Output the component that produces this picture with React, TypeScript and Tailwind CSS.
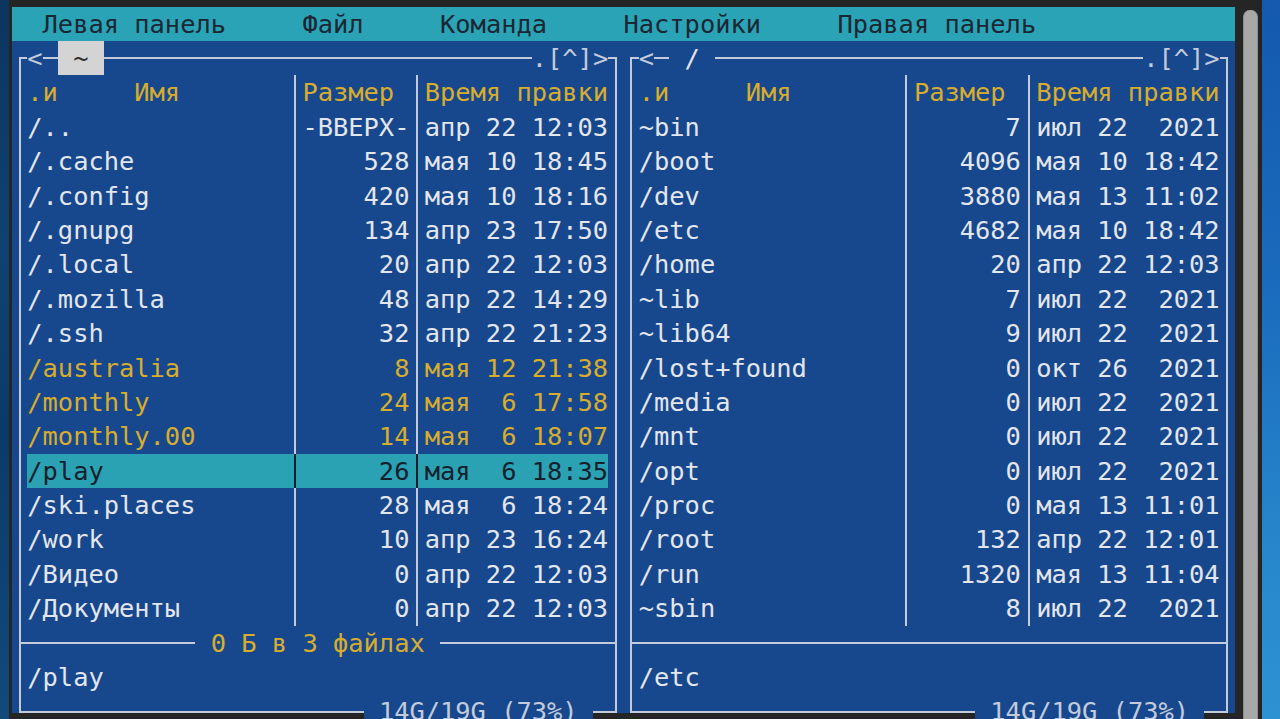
import React from 'react';

type Tone = 'normal' | 'yellow' | 'selected';

type FileRow = {
  name: string;
  size: string;
  date: string;
  tone?: Tone;
};

const leftRows: FileRow[] = [
  { name: '/..', size: '-ВВЕРХ-', date: 'апр 22 12:03' },
  { name: '/.cache', size: '528', date: 'мая 10 18:45' },
  { name: '/.config', size: '420', date: 'мая 10 18:16' },
  { name: '/.gnupg', size: '134', date: 'апр 23 17:50' },
  { name: '/.local', size: '20', date: 'апр 22 12:03' },
  { name: '/.mozilla', size: '48', date: 'апр 22 14:29' },
  { name: '/.ssh', size: '32', date: 'апр 22 21:23' },
  { name: '/australia', size: '8', date: 'мая 12 21:38', tone: 'yellow' },
  { name: '/monthly', size: '24', date: 'мая  6 17:58', tone: 'yellow' },
  { name: '/monthly.00', size: '14', date: 'мая  6 18:07', tone: 'yellow' },
  { name: '/play', size: '26', date: 'мая  6 18:35', tone: 'selected' },
  { name: '/ski.places', size: '28', date: 'мая  6 18:24' },
  { name: '/work', size: '10', date: 'апр 23 16:24' },
  { name: '/Видео', size: '0', date: 'апр 22 12:03' },
  { name: '/Документы', size: '0', date: 'апр 22 12:03' },
];

const rightRows: FileRow[] = [
  { name: '~bin', size: '7', date: 'июл 22  2021' },
  { name: '/boot', size: '4096', date: 'мая 10 18:42' },
  { name: '/dev', size: '3880', date: 'мая 13 11:02' },
  { name: '/etc', size: '4682', date: 'мая 10 18:42' },
  { name: '/home', size: '20', date: 'апр 22 12:03' },
  { name: '~lib', size: '7', date: 'июл 22  2021' },
  { name: '~lib64', size: '9', date: 'июл 22  2021' },
  { name: '/lost+found', size: '0', date: 'окт 26  2021' },
  { name: '/media', size: '0', date: 'июл 22  2021' },
  { name: '/mnt', size: '0', date: 'июл 22  2021' },
  { name: '/opt', size: '0', date: 'июл 22  2021' },
  { name: '/proc', size: '0', date: 'мая 13 11:01' },
  { name: '/root', size: '132', date: 'апр 22 12:01' },
  { name: '/run', size: '1320', date: 'мая 13 11:04' },
  { name: '~sbin', size: '8', date: 'июл 22  2021' },
];

function Sep({ dark }: { dark?: boolean }) {
  return (
    <div className="w-[1ch] flex-none flex justify-center">
      <div className={dark ? 'w-[2px] h-full bg-[#12202b]' : 'w-[2px] h-full bg-[#c3cbdb]'} />
    </div>
  );
}

function Row({ row }: { row: FileRow }) {
  const selected = row.tone === 'selected';
  const color = selected
    ? 'text-[#14212c] bg-[#2ba2b4]'
    : row.tone === 'yellow'
    ? 'text-[#d8ad2e]'
    : 'text-[#e3e6ec]';
  return (
    <div className={`flex h-[34.4px] ${color}`}>
      <div className="w-[17ch] flex-none overflow-hidden">{row.name}</div>
      <Sep dark={selected} />
      <div className="w-[7ch] flex-none text-right">{row.size}</div>
      <Sep dark={selected} />
      <div className="w-[12ch] flex-none">{row.date}</div>
    </div>
  );
}

interface PanelProps {
  path: string;
  active?: boolean;
  rows: FileRow[];
  status?: string;
  current: string;
}

function Panel({ path, active, rows, status, current }: PanelProps) {
  return (
    <div className="w-[40ch] flex-none">
      <div className="mt-[16.2px] mx-[calc(0.5ch-1px)] border-2 border-[#c3cbdb] px-[calc(0.5ch-1px)]">
        {/* title on the top border */}
        <div className="mt-[-18.2px] h-[34.4px] flex">
          <span className="bg-[#17488d] text-[#c3cbdb]">&lt;</span>
          <span className="w-[1ch]" />
          {active ? (
            <span className="bg-[#d4d4d4] text-[#2e2e2e]"> {path} </span>
          ) : (
            <span className="bg-[#17488d] text-[#e3e6ec]"> {path} </span>
          )}
          <span className="flex-1" />
          <span className="bg-[#17488d] text-[#c3cbdb]">.[^]&gt;</span>
        </div>

        {/* column headers */}
        <div className="flex h-[34.4px] text-[#d8ad2e]">
          <div className="w-[17ch] flex-none">.и     Имя</div>
          <Sep />
          <div className="w-[7ch] flex-none">Размер</div>
          <Sep />
          <div className="w-[12ch] flex-none">Время правки</div>
        </div>

        {rows.map((r) => (
          <Row key={r.name} row={r} />
        ))}

        {/* mini status line */}
        <div className="mx-[calc(1px-0.5ch)] h-[34.4px] flex items-center">
          <div className="flex-1 h-[2px] bg-[#c3cbdb]" />
          {status && <span className="text-[#d8ad2e]"> {status} </span>}
          <div className="flex-1 h-[2px] bg-[#c3cbdb]" />
        </div>

        <div className="h-[34.4px] text-[#e3e6ec]">{current}</div>

        {/* disk usage on the bottom border */}
        <div className="h-[34.4px] mb-[-18.2px] flex justify-end">
          <span className="bg-[#17488d] text-[#c3cbdb]"> 14G/19G (73%) </span>
          <span className="w-[1ch]" />
        </div>
      </div>
    </div>
  );
}

export default function App() {
  return (
    <div className="w-[1280px] h-[719px] overflow-hidden flex bg-[#252525] font-['DejaVu_Sans_Mono','Liberation_Mono',monospace] text-[25.4px] leading-[34.4px] whitespace-pre">
      <div className="w-[9px] flex-none bg-[linear-gradient(180deg,#0c355f_0%,#0f4272_35%,#0b3a68_60%,#124a7c_100%)]" />
      <div className="w-[1253px] flex-none flex bg-[#252525] pt-[6.6px] pl-[3px]">
        <div className="w-[80ch] flex-none self-start bg-[#17488d]">
          <div className="h-[34.4px] bg-[#2aa3b6] text-[#1b2733]">
            {'  Левая панель     Файл     Команда     Настройки     Правая панель'}
          </div>
          <div className="flex">
            <Panel path="~" active rows={leftRows} status="0 Б в 3 файлах" current="/play" />
            <Panel path="/" rows={rightRows} current="/etc" />
          </div>
        </div>
        <div className="w-[7.6px] flex-none" />
        <div className="w-[15px] flex-none mt-[3.4px] bg-[#a8a8a8] rounded-t-[7px] border-x border-[#8e8e8e]" />
        <div className="w-[4px] flex-none" />
      </div>
      <div className="w-[18px] flex-none bg-[linear-gradient(180deg,#1459ad_0%,#1a6bbd_40%,#2786cb_75%,#2d92d2_100%)]" />
    </div>
  );
}
